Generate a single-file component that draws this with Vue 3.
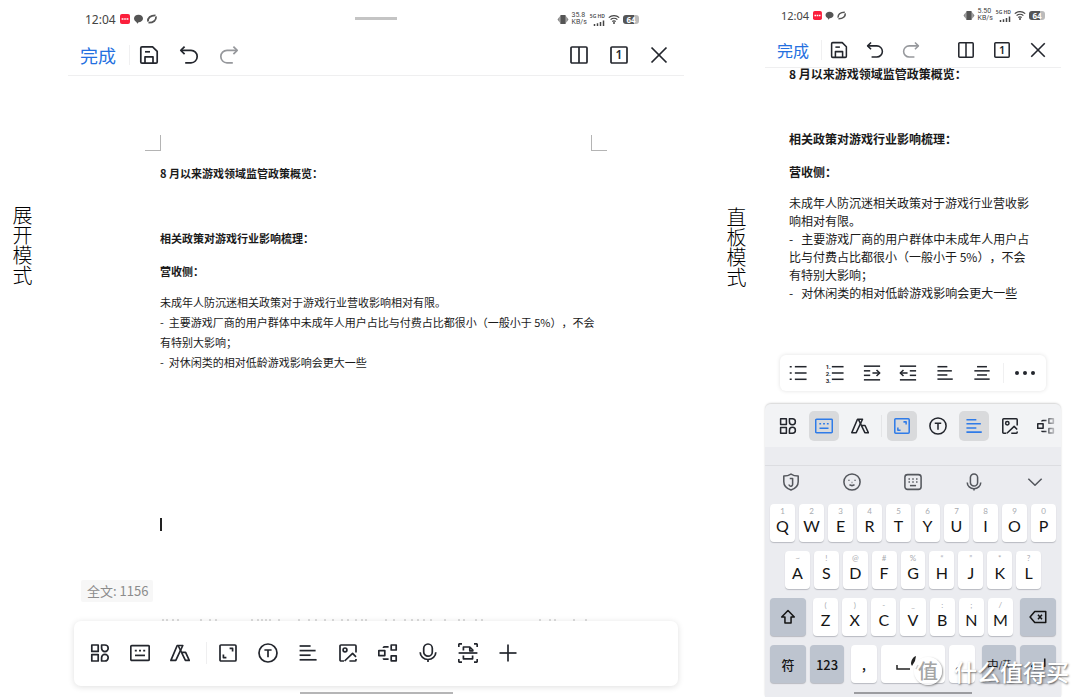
<script setup>
import { h } from 'vue'

const glyphs = {
  save: ['M3 1.8h10.6l4.6 4.6V17a1.2 1.2 0 0 1-1.2 1.2H3A1.2 1.2 0 0 1 1.8 17V3A1.2 1.2 0 0 1 3 1.8z', 'M6 18v-6.2h8V18', 'M6 6.8h5'],
  undo: ['M5.6 1.6 1.8 5.4l3.8 3.8', 'M2 5.4h10a6.2 6.2 0 0 1 0 12.4H6.2'],
  redo: ['M14.4 1.6l3.8 3.8-3.8 3.8', 'M18 5.4H8a6.2 6.2 0 0 0 0 12.4h5.8'],
  split: ['M3 2h14a1 1 0 0 1 1 1v14a1 1 0 0 1-1 1H3a1 1 0 0 1-1-1V3a1 1 0 0 1 1-1z', 'M10 2v16'],
  close: ['M2.5 2.5l15 15', 'M17.5 2.5l-15 15'],
  apps: ['M1.8 2h6.4v6.4H1.8z', 'M11.6 2h3.3a3.3 3.3 0 1 1-3.3 3.3z', 'M1.8 11.6h6.4V18H1.8z', 'M11.6 18v-3.3a3.3 3.3 0 1 1 3.3 3.3z'],
  keyboard: ['M1.8 2.6h16.4a1 1 0 0 1 1 1v12.8a1 1 0 0 1-1 1H1.8a1 1 0 0 1-1-1V3.6a1 1 0 0 1 1-1z', 'M4.8 7.6h2M9 7.6h2M13.2 7.6h2', 'M5 12.4h10'],
  text: ['M7.2 2.5h5.6L5.8 17.4H.9z', 'M8.4 3l7 14.4h3.9l-3.7-8h-4'],
  expand: ['M3 2h14a1 1 0 0 1 1 1v14a1 1 0 0 1-1 1H3a1 1 0 0 1-1-1V3a1 1 0 0 1 1-1z', 'M11.6 5.4h3v3', 'M5.4 11.6v3h3'],
  type: ['M10 1a9 9 0 1 1 0 18a9 9 0 1 1 0-18z', 'M6.4 7h7.2M10 7v7.2'],
  left: ['M1.6 3h11', 'M1.6 7.6h16', 'M1.6 12.2h11', 'M1.6 16.8h17'],
  center: ['M4.5 3h11', 'M1.5 7.6h17', 'M4.5 12.2h11', 'M1.5 16.8h17'],
  image: ['M6 18H3a1 1 0 0 1-1-1V3a1 1 0 0 1 1-1h14a1 1 0 0 1 1 1v6.4', 'M6.6 18l8-7.6 3.4 3.4', 'M18 16v1a1 1 0 0 1-1 1h-5.6', 'M7 5a1.9 1.9 0 1 1 0 3.8A1.9 1.9 0 1 1 7 5z'],
  structure: ['M.8 7.6h6v5h-6z', 'M13.2 2h5v5h-5z', 'M13.2 12.8h5v5h-5z', 'M5.4 4.9q0-1 1-1h4.2', 'M5.4 15.2q0 1 1 1h4.2'],
  mic: ['M10 1a4.3 4.3 0 0 1 4.3 4.3v3.6a4.3 4.3 0 0 1-8.6 0V5.3A4.3 4.3 0 0 1 10 1z', 'M2.2 9.2a7.8 7.3 0 0 0 15.6 0', 'M10 16.6V19'],
  scan: ['M.8 4V1.6a.8.8 0 0 1 .8-.8H4', 'M16 .8h2.4a.8.8 0 0 1 .8.8V4', 'M.8 16v2.4a.8.8 0 0 0 .8.8H4', 'M16 19.2h2.4a.8.8 0 0 0 .8-.8V16', 'M.6 10h18.8', 'M5.4 7.6V4h6.4l3 3v.8h-3V4.4', 'M5.4 12.4v3.4h9.2v-3.4'],
  plus: ['M10 1.5v17', 'M1.5 10h17'],
  bullets: ['M6.5 3h13', 'M6.5 10h13', 'M6.5 17h13', 'M.8 3h2.2M.8 10h2.2M.8 17h2.2'],
  numbers: ['M6.5 3h13', 'M6.5 10h13', 'M6.5 17h13'],
  indent: ['M1 2.4h18', 'M1 17.6h18', 'M1 7.6h7', 'M1 12.6h7', 'M10.5 10h8', 'M15 6.6l3.6 3.4-3.6 3.4'],
  outdent: ['M1 2.4h18', 'M1 17.6h18', 'M12 7.6h7', 'M12 12.6h7', 'M1.5 10h8', 'M5 6.6L1.4 10 5 13.4'],
  shield: ['M10 1.2c2.4 1.6 5 2.2 8 2.2v6.4c0 4.4-3.2 7.6-8 9.2-4.8-1.6-8-4.8-8-9.2V3.4c3 0 5.6-.6 8-2.2z', 'M8.6 6h3.2v6.4a2 2 0 0 1-4 .4'],
  smile: ['M10 1a9 9 0 1 1 0 18a9 9 0 1 1 0-18z', 'M6.6 7.4v1.2M13.4 7.4v1.2M9.6 10.5h.8', 'M7.2 13q2.8 2 5.6 0'],
  pad: ['M4 1.8h12a3 3 0 0 1 3 3v10.4a3 3 0 0 1-3 3H4a3 3 0 0 1-3-3V4.8a3 3 0 0 1 3-3z', 'M5 6.6h1.6M9.2 6.6h1.6M13.4 6.6H15M5 10h1.6M9.2 10h1.6M13.4 10H15', 'M6.6 14h6.8'],
  mic2: ['M10 1a4 4 0 0 1 4 4v5.5a4 4 0 0 1-8 0V5a4 4 0 0 1 4-4z', 'M2.5 10.5a7.5 7 0 0 0 15 0', 'M10 17.5V19.5'],
  down: ['M2.6 6.4L10 13.6l7.4-7.2'],
  shift: ['M10 2.8L3 10h3.6v6.6h6.8V10H17z'],
  back: ['M6.4 4h12.2v12H6.4L1.2 10z', 'M10 7.6l4.4 4.8M14.4 7.6l-4.4 4.8'],
  enter: ['M17.5 4v8.5H3', 'M7 8.5l-4 4 4 4']
}

const Icon = ({ name }) =>
  h('svg', { viewBox: '0 0 20 20', 'aria-hidden': 'true' }, glyphs[name].map(d => h('path', { d })))
Icon.props = ['name']

const StatusLeft = () =>
  h('svg', { viewBox: '0 0 38 12', 'aria-hidden': 'true' }, [
    h('rect', { x: 0, y: 1, width: 10, height: 10, rx: 2, fill: '#fb1f3c' }),
    h('path', { d: 'M1.6 6h1.9M4.2 6h1.6M6.5 6h1.9', stroke: '#fff', 'stroke-width': 1.6 }),
    h('path', { d: 'M18.5 1.8c2.6 0 4.5 1.7 4.5 3.7s-1.900 3.700-4.500 3.700l-1 1.600-1.200-1.900C15 8.300 14 7 14 5.500c0-2 1.900-3.700 4.500-3.700z', fill: '#555' }),
    h('path', { d: 'M28 8.500c-.5-3.500 2.500-6.300 7.500-6.200M36 3.500c.5 3.500-2.500 6.300-7.500 6.200', fill: 'none', stroke: '#555', 'stroke-width': 1.8 })
  ])

const screens = [
  { id: 'wide', speed: '35.8' },
  { id: 'slim', speed: '5.50' }
]

const wideTools = [
  ['apps', 'keyboard', 'text'],
  ['expand', 'type', 'left', 'image', 'structure', 'mic', 'scan', 'plus']
]
const slimTools = [
  ['apps', 'keyboard', 'text'],
  ['expand', 'type', 'left', 'image', 'structure']
]
const active = ['keyboard', 'expand', 'left']
const formatTools = ['bullets', 'numbers', 'indent', 'outdent', 'left', 'center']
const imeTools = ['shield', 'smile', 'pad', 'mic2', 'down']

const pair = (letters, hints) => [...letters].map((k, i) => ({ k, hint: hints[i] }))
const row1 = pair('QWERTYUIOP', '1234567890')
const row2 = pair('ASDFGHJKL', '~!@#%“”*?')
const row3 = pair('ZXCVBNM', '()-_:;/')

const paragraphs = {
  wide: [
    '未成年人防沉迷相关政策对于游戏行业营收影响相对有限。',
    '-  主要游戏厂商的用户群体中未成年人用户占比与付费占比都很小（一般小于 5%），不会',
    '有特别大影响；',
    '-  对休闲类的相对低龄游戏影响会更大一些'
  ],
  slim: [
    '未成年人防沉迷相关政策对于游戏行业营收影',
    '响相对有限。',
    '-   主要游戏厂商的用户群体中未成年人用户占',
    '比与付费占比都很小（一般小于 5%），不会',
    '有特别大影响；',
    '-   对休闲类的相对低龄游戏影响会更大一些'
  ]
}

const strokes = [163, 167, 173, 178, 201, 210, 216, 252, 258, 262, 266, 270, 279, 299, 309, 316, 325, 333, 342, 348, 356, 362, 366, 386, 394, 405, 412, 418, 424, 431, 445, 459, 464, 476, 482, 540, 550, 555, 574, 586]
</script>

<template>
  <main class="page">
    <template v-for="s in screens" :key="s.id">
      <p class="caption" :class="s.id">{{ s.id === 'wide' ? '展开模式' : '直板模式' }}</p>
      <section class="screen" :class="s.id">
        <div class="status">
          <div class="status-side">
            <span class="clock">12:04</span>
            <StatusLeft class="notices" />
          </div>
          <span v-if="s.id === 'wide'" class="grabber"></span>
          <div class="status-side end">
            <svg class="vibrate" viewBox="0 0 12 12" aria-hidden="true">
              <rect x="3" y="1" width="6" height="10" rx="1" fill="#555" />
              <path d="M2.5 2.5v7L0 6zM9.5 2.5v7L12 6z" fill="#888" />
            </svg>
            <span class="tiny"><span>{{ s.speed }}</span><span>KB/s</span></span>
            <span class="signal">
              <span>5G HD</span>
              <svg viewBox="0 0 12 6" aria-hidden="true">
                <path d="M1.5 6V4M4.5 6V3.2M7.5 6V2M10.5 6V.4" stroke="#444" stroke-width="1.5" />
              </svg>
            </span>
            <svg class="wifi" viewBox="0 0 12 10" aria-hidden="true">
              <path d="M.8 3.6a7.6 7.6 0 0 1 10.4 0M2.6 5.6a5 5 0 0 1 6.8 0M4.3 7.5a2.6 2.6 0 0 1 3.4 0" fill="none" stroke="#444" stroke-width="1.2" />
              <circle cx="6" cy="9" r="1" fill="#444" />
            </svg>
            <span class="battery">64</span>
          </div>
        </div>

        <header class="bar">
          <button class="done" type="button">完成</button>
          <div class="group first">
            <button type="button" aria-label="保存"><Icon name="save" class="icon" /></button>
            <button type="button" aria-label="撤销"><Icon name="undo" class="icon" /></button>
            <button type="button" aria-label="恢复"><Icon name="redo" class="icon faint" /></button>
          </div>
          <div class="group last">
            <button type="button" aria-label="分屏"><Icon name="split" class="icon" /></button>
            <button type="button" aria-label="窗口 1">
              <svg class="icon tabs" viewBox="0 0 20 20" aria-hidden="true">
                <rect x="2" y="2" width="16" height="16" rx="1" />
                <text x="10" y="14" text-anchor="middle">1</text>
              </svg>
            </button>
            <button type="button" aria-label="关闭"><Icon name="close" class="icon" /></button>
          </div>
        </header>

        <article class="doc">
          <div v-if="s.id === 'wide'" class="corners"><i></i><i></i></div>
          <h2 class="t1">8 月以来游戏领域监管政策概览：</h2>
          <h2 class="t2">相关政策对游戏行业影响梳理：</h2>
          <h2 class="t3">营收侧：</h2>
          <p class="body"><span v-for="line in paragraphs[s.id]" :key="line">{{ line }}</span></p>
          <span v-if="s.id === 'wide'" class="caret"></span>
        </article>

        <template v-if="s.id === 'wide'">
          <div class="count">全文: 1156</div>
          <svg class="peek" viewBox="160 0 432 2" preserveAspectRatio="none" aria-hidden="true">
            <path v-for="x in strokes" :key="x" :d="`M${x} 0v2`" />
          </svg>
          <nav class="dock">
            <div v-for="(g, i) in wideTools" :key="i" class="dock-group">
              <button v-for="t in g" :key="t" type="button" :aria-label="t"><Icon :name="t" class="icon" /></button>
            </div>
          </nav>
          <span class="home"></span>
        </template>

        <template v-else>
          <nav class="format">
            <div class="format-list">
              <button v-for="t in formatTools" :key="t" type="button" :aria-label="t">
                <span v-if="t === 'numbers'" class="nums"><span>1.</span><span>2.</span><span>3.</span></span>
                <Icon :name="t" class="icon" />
              </button>
            </div>
            <button class="more" type="button" aria-label="更多"><i></i><i></i><i></i></button>
          </nav>
          <div class="ime">
            <nav class="panel">
              <div v-for="(g, i) in slimTools" :key="i" class="panel-group">
                <button v-for="t in g" :key="t" type="button" :aria-label="t" :class="{ on: active.includes(t), fade: t === 'structure' }">
                  <Icon :name="t" class="icon" />
                </button>
              </div>
            </nav>
            <div class="ime-tools">
              <button v-for="t in imeTools" :key="t" type="button" :aria-label="t"><Icon :name="t" class="icon" /></button>
            </div>
            <div class="keys">
              <div class="row">
                <button v-for="c in row1" :key="c.k" class="key" type="button"><small>{{ c.hint }}</small>{{ c.k }}</button>
              </div>
              <div class="row inset">
                <button v-for="c in row2" :key="c.k" class="key" type="button"><small>{{ c.hint }}</small>{{ c.k }}</button>
              </div>
              <div class="row wide-gap">
                <button class="key dark side" type="button" aria-label="shift"><Icon name="shift" class="icon" /></button>
                <div class="row grow">
                  <button v-for="c in row3" :key="c.k" class="key" type="button"><small>{{ c.hint }}</small>{{ c.k }}</button>
                </div>
                <button class="key dark side" type="button" aria-label="删除"><Icon name="back" class="icon" /></button>
              </div>
              <div class="row wide-gap">
                <div class="row">
                  <button class="key dark side word" type="button">符</button>
                  <button class="key dark mid word" type="button">123</button>
                </div>
                <div class="row grow">
                  <button class="key punct" type="button">,</button>
                  <button class="key space" type="button" aria-label="空格">
                    <svg viewBox="0 0 36 18" aria-hidden="true">
                      <path d="M2 10v4h13M21 14l2-4M25 14h2M29 14h2M33 14h1" fill="none" stroke="#222" stroke-width="1.5" />
                      <path d="M16 9c0-4 2-7 5-8l-1 5-3 5z" fill="#222" />
                    </svg>
                  </button>
                  <button class="key punct" type="button">。</button>
                </div>
                <div class="row">
                  <button class="key dark mid lang" type="button">中<span>/英</span></button>
                  <button class="key dark side" type="button" aria-label="换行"><Icon name="enter" class="icon" /></button>
                </div>
              </div>
            </div>
            <span class="home"></span>
          </div>
        </template>
      </section>
    </template>
    <div class="mark"><span class="seal">值</span><span>什么值得买</span></div>
  </main>
</template>

<style>
body {
  margin: 0;
  background: #fff;
}
</style>

<style scoped>
.page {
  position: relative;
  display: grid;
  grid-template-columns: 68px minmax(0, 616fr) 81px minmax(0, 296fr) 19px;
  min-height: 100vh;
  overflow: hidden;
  background: #fff;
  color: #1a1a1a;
  font-family: "Noto Sans", "Noto Sans CJK SC", sans-serif;
}
button {
  display: flex;
  align-items: center;
  justify-content: center;
  margin: 0;
  padding: 0;
  border: 0;
  background: none;
  color: #23262d;
  font: inherit;
}
.icon {
  width: 20px;
  height: 20px;
  fill: none;
  stroke: currentColor;
  stroke-width: 1.7;
  stroke-linejoin: round;
}
.slim .icon {
  width: 18px;
  height: 18px;
}
.caption {
  margin: 0;
  padding: 205px 0 0 12px;
  justify-self: start;
  writing-mode: vertical-rl;
  font: 300 20px/20px "Noto Sans CJK SC", sans-serif;
  color: #000;
}
.caption.slim {
  padding: 207px 0 0 42px;
}
.screen {
  display: flex;
  flex-direction: column;
  min-width: 0;
}

.status {
  display: flex;
  align-items: center;
  justify-content: space-between;
  box-sizing: border-box;
  height: 32px;
  padding: 0 16px 2px;
  font-size: 11px;
  color: #444;
}
.wide .status {
  height: 36px;
  padding: 2px 45px 0 17px;
  font-size: 12px;
}
.status-side {
  display: flex;
  align-items: center;
  gap: 4px;
}
.end {
  gap: 3px;
}
.notices {
  width: 34px;
  height: 11px;
}
.wide .notices {
  width: 38px;
  height: 12px;
}
.grabber {
  width: 42px;
  height: 3px;
  margin-left: 38px;
  margin-bottom: 2px;
  background: #c4c4c4;
}
.vibrate {
  width: 12px;
  height: 11px;
}
.tiny,
.signal {
  display: flex;
  flex-direction: column;
  font-size: 7px;
  line-height: 7px;
}
.tiny {
  font-family: Roboto, sans-serif;
}
.signal {
  align-items: flex-end;
  font-size: 5px;
  font-weight: 600;
}
.signal svg {
  width: 12px;
  height: 6px;
}
.wifi {
  width: 12px;
  height: 10px;
}
.battery {
  width: 16px;
  border-radius: 3px;
  background: linear-gradient(90deg, #555 70%, #bbb 70%);
  color: #fff;
  font-size: 8px;
  font-weight: 700;
  line-height: 9px;
  text-align: center;
}

.bar {
  display: flex;
  box-sizing: border-box;
  height: 36px;
  padding: 0 5px 0 12px;
  border-bottom: 1px solid #efeff0;
  background: #fff;
}
.wide .bar {
  height: 40px;
  padding-bottom: 1px;
}
.done {
  margin-right: 12px;
  color: #2470e0;
  font: 16px/20px "Noto Sans CJK SC", sans-serif;
}
.wide .done {
  margin-right: 13px;
  font-size: 18px;
}
.group {
  display: flex;
}
.group button {
  width: 36px;
}
.wide .group button {
  width: 40px;
}
.first::before {
  content: "";
  align-self: center;
  width: 1px;
  height: 20px;
  margin-right: -1px;
  background: #f0f0f1;
}
.last {
  margin-left: auto;
}
.faint {
  color: #96989c;
}
.tabs text {
  fill: currentColor;
  stroke: none;
  font-size: 12px;
  font-weight: 600;
}

.doc {
  flex: 1;
  padding: 0 24px;
  font-family: "Noto Sans CJK SC", sans-serif;
  font-size: 12px;
  line-height: 18px;
  white-space: pre;
  text-spacing-trim: space-all;
}
.wide .doc {
  padding: 59px 92px 0;
  font-size: 11px;
  line-height: 20px;
}
.doc h2 {
  margin: 0;
  font-size: inherit;
  font-weight: 700;
}
.slim .t1 {
  line-height: 12px;
}
.slim .t2 {
  margin-top: 50px;
}
.slim .t3 {
  margin-top: 15px;
}
.wide .t1 {
  margin-top: 12px;
}
.wide .t3 {
  margin-top: 13px;
}
.wide .t2 {
  margin-top: 45px;
}
.body {
  margin: 13px 0 0;
}
.wide .body {
  margin-top: 11px;
}
.body span {
  display: block;
}
.corners {
  display: flex;
  justify-content: space-between;
  margin: 0 -15px;
}
.corners i {
  box-sizing: border-box;
  width: 16px;
  height: 16px;
  border: solid #b4b4b4;
  border-width: 0 1px 1px 0;
}
.corners i:last-child {
  border-width: 0 0 1px 1px;
}
.caret {
  display: block;
  width: 2px;
  height: 13px;
  margin-top: 146px;
  background: #222;
}
.count {
  align-self: flex-start;
  margin-left: 13px;
  padding: 0 5px 0 6px;
  border-radius: 2px;
  background: #f7f7f7;
  color: #8c8c8c;
  font-family: "Noto Sans CJK SC", sans-serif;
  font-size: 13px;
  line-height: 22px;
}
.peek {
  height: 2px;
  margin: 17px 92px 0;
  stroke: #bbb;
  stroke-width: 1;
}
.dock {
  display: flex;
  box-sizing: border-box;
  height: 65px;
  margin: 0 6px;
  padding: 0 6px 1px;
  border-radius: 7px;
  background: #fff;
  box-shadow: 0 1px 6px rgba(0, 0, 0, 0.13);
}
.dock-group {
  display: flex;
}
.dock-group button {
  width: 40px;
}
.dock-group + .dock-group::before,
.panel-group + .panel-group::before {
  content: "";
  align-self: center;
  width: 1px;
  height: 22px;
  margin: 0 0 0 6px;
  background: #efeff0;
}
.dock-group + .dock-group::before {
  margin-right: 1px;
}
.home {
  align-self: center;
  width: 153px;
  height: 2px;
  margin: 6px 0 3px;
  background: #b5b5b6;
}

.format {
  display: flex;
  height: 36px;
  margin: 0 15px 13px;
  border-radius: 6px;
  background: #fff;
  box-shadow: 0 0 4px rgba(0, 0, 0, 0.12);
}
.format-list {
  display: flex;
  flex: 1;
  margin-right: 3px;
}
.format-list button {
  flex: 1;
  position: relative;
}
.nums {
  position: absolute;
  left: 9px;
  top: 8px;
  display: flex;
  flex-direction: column;
  font-family: Roboto, sans-serif;
  font-size: 6px;
  font-weight: 700;
  line-height: 7px;
}
.more {
  gap: 4px;
  width: 43px;
  background: linear-gradient(#f0f0f1, #f0f0f1) left center / 1px 20px no-repeat;
}
.more i {
  width: 4px;
  height: 4px;
  border-radius: 2px;
  background: #23262d;
}
.ime {
  display: flex;
  flex-direction: column;
  border-radius: 6px 6px 0 0;
  background: #ebecf0;
  box-shadow: 0 -1px 2px rgba(0, 0, 0, 0.18);
}
.panel {
  display: flex;
  height: 43px;
  padding-left: 8px;
  align-items: center;
  overflow: hidden;
  border-radius: 6px 6px 0 0;
  background: #f2f3f5;
}
.panel-group {
  display: flex;
  gap: 6px;
}
.panel-group + .panel-group::before {
  margin-right: -1px;
  background: #e4e5e7;
}
.panel button {
  width: 30px;
  height: 30px;
  flex: none;
  border-radius: 5px;
}
.panel .on {
  background: #d9dadc;
  color: #2f7be8;
}
.panel .fade {
  -webkit-mask-image: linear-gradient(90deg, #000 40%, transparent 90%);
  mask-image: linear-gradient(90deg, #000 40%, transparent 90%);
}
.ime-tools {
  display: flex;
  justify-content: space-between;
  height: 32px;
  margin-top: 18px;
  padding: 0 10px;
  border-top: 1px solid #dcdde1;
}
.ime-tools button {
  width: 32px;
  color: #54575d;
}
.keys {
  display: flex;
  flex-direction: column;
  gap: 9px;
  padding: 6px 5px 0;
}
.row {
  display: flex;
  gap: 4px;
}
.inset {
  padding: 0 15px;
}
.wide-gap {
  gap: 7px;
}
.grow {
  flex: 1;
}
.key {
  flex: 1;
  flex-direction: column;
  box-sizing: border-box;
  height: 38px;
  min-width: 0;
  border-radius: 4px;
  background: #fff;
  box-shadow: 0 1px 1px #b9bbc1;
  color: #151515;
  font-family: Lato, sans-serif;
  font-size: 16px;
  line-height: 19px;
}
.key:has(small) {
  justify-content: flex-start;
  padding-top: 2px;
}
.key small {
  height: 10px;
  color: #a9abb0;
  font-size: 8px;
  line-height: 10px;
}
.dark {
  flex: none;
  background: #bdc4cf;
}
.side {
  width: 36px;
}
.mid {
  width: 34px;
}
.space {
  flex: 0 0 64px;
}
.space svg {
  width: 36px;
  height: 18px;
}
.word,
.punct {
  font-family: "Noto Sans CJK SC", sans-serif;
  font-size: 13px;
  font-weight: 500;
}
.lang {
  flex-direction: row;
  font-family: "Noto Sans CJK SC", sans-serif;
  font-size: 12px;
}
.lang span {
  font-size: 9px;
}
.ime .home {
  width: 118px;
  margin: 9px 0 3px;
  background: #9b9ca0;
}

.mark {
  position: absolute;
  right: 11px;
  bottom: 9px;
  display: flex;
  align-items: center;
  gap: 12px;
  color: #fff;
  font: 500 23px/34px "Noto Sans CJK SC", sans-serif;
  text-shadow: 1px 1px 2px rgba(60, 60, 60, 0.7);
}
.seal {
  width: 28px;
  height: 28px;
  border-radius: 14px;
  background: rgba(255, 255, 255, 0.8);
  box-shadow: 1px 1px 2px rgba(80, 80, 80, 0.6);
  color: #a5a5a5;
  font-size: 20px;
  line-height: 27px;
  text-align: center;
  text-shadow: none;
}
</style>
